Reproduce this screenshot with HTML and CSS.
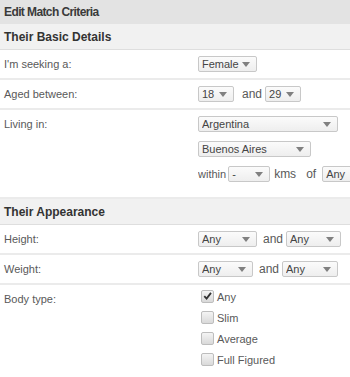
FILE: index.html
```html
<!DOCTYPE html>
<html lang="en">
<head>
<meta charset="UTF-8" />
<title>Edit Match Criteria</title>
<link rel="stylesheet" href="styles.css">
</head>
<body>

<div class="panel">
  <h1 class="panel-title">Edit Match Criteria</h1>

  <h2 class="section">Their Basic Details</h2>
  <div class="row">
    <div class="label">I'm seeking a:</div>
    <div class="field">
      <span class="sel w-female"><select><option>Female</option></select></span>
    </div>
  </div>
  <div class="row">
    <div class="label">Aged between:</div>
    <div class="field">
      <span class="sel w-age"><select><option>18</option></select></span>
      <span class="word word-age">and</span>
      <span class="sel w-age"><select><option>29</option></select></span>
    </div>
  </div>
  <div class="row row-tall">
    <div class="label">Living in:</div>
    <div class="field stack">
      <span class="sel w-country"><select><option>Argentina</option></select></span>
      <span class="sel w-region"><select><option>Buenos Aires</option></select></span>
      <div class="inline">
        <span class="word word-tight">within</span>
        <span class="sel w-dist"><select><option>-</option></select></span>
        <span class="word word-kms">kms</span>
        <span class="word word-of">of</span>
        <span class="sel w-of"><select><option>Any</option></select></span>
      </div>
    </div>
  </div>

  <h2 class="section">Their Appearance</h2>
  <div class="row">
    <div class="label">Height:</div>
    <div class="field">
      <span class="sel w-any"><select><option>Any</option></select></span>
      <span class="word">and</span>
      <span class="sel w-any2"><select><option>Any</option></select></span>
    </div>
  </div>
  <div class="row">
    <div class="label">Weight:</div>
    <div class="field">
      <span class="sel w-any2"><select><option>Any</option></select></span>
      <span class="word">and</span>
      <span class="sel w-any3"><select><option>Any</option></select></span>
    </div>
  </div>
  <div class="row row-body">
    <div class="label">Body type:</div>
    <div class="field checks">
      <label class="check"><span class="box on"><svg viewBox="0 0 12 12" width="12" height="12"><path d="M2.5 6.2 L5 8.8 L9.8 2.6" fill="none" stroke="#333" stroke-width="2"/></svg></span>Any</label>
      <label class="check"><span class="box"></span>Slim</label>
      <label class="check"><span class="box"></span>Average</label>
      <label class="check"><span class="box"></span>Full Figured</label>
    </div>
  </div>
</div>

</body>
</html>
```

FILE: styles.css
```css
html, body {
  margin: 0;
  padding: 0;
  overflow: hidden;
  background: #fff;
}
body {
  font-family: "Liberation Sans", Arial, sans-serif;
  font-size: 11px;
  color: #595959;
}
.panel {
  width: 350px;
  overflow: hidden;
}
.panel-title {
  margin: 0;
  height: 24px;
  line-height: 24px;
  padding: 0 4px;
  background: #e3e3e3;
  font-size: 12px;
  letter-spacing: -0.6px;
  font-weight: bold;
  color: #3a3a3a;
}
.section {
  margin: 0;
  height: 25px;
  line-height: 26px;
  padding: 0 4px;
  background: #f1f1f1;
  border-bottom: 1px solid #dedede;
  font-size: 12px;
  font-weight: bold;
  color: #333;
}
.row {
  display: flex;
  height: 28px;
  border-bottom: 2px solid #ebebeb;
}
.row-tall {
  height: 87px;
}
.row-body {
  height: 92px;
}
.label {
  flex: none;
  width: 194px;
  padding: 8px 0 0 4px;
}
.field {
  flex: 1;
  min-width: 0;
  display: flex;
  align-items: flex-start;
  padding-top: 6px;
  white-space: nowrap;
  overflow: hidden;
}
.stack {
  flex-direction: column;
  gap: 9px;
}
.inline {
  display: flex;
  align-items: center;
}
.word {
  margin: 0 3px 0 6px;
  line-height: 16px;
  font-size: 12px;
}
.word-age {
  margin: 0 3px 0 8px;
}
.word-tight {
  margin: 0 2px 0 0;
  font-size: 11px;
}
.word-kms {
  margin: 0 0 0 4px;
}
.word-of {
  margin: 0 6px 0 10px;
}

/* select boxes */
.sel {
  position: relative;
  display: inline-block;
  height: 16px;
  flex: none;
}
.sel select {
  -webkit-appearance: none;
  appearance: none;
  width: 100%;
  height: 16px;
  margin: 0;
  padding: 0 0 0 3px;
  border: 1px solid #c8c8c8;
  border-radius: 2px;
  background: linear-gradient(#fbfbfb, #eeeeee);
  font-family: inherit;
  font-size: 11px;
  color: #444;
  line-height: 14px;
}
.sel::after {
  content: "";
  position: absolute;
  right: 7px;
  top: 6px;
  border-left: 4px solid transparent;
  border-right: 4px solid transparent;
  border-top: 5px solid #808080;
  pointer-events: none;
}
.w-female { width: 59px; }
.w-age { width: 36px; }
.w-country { width: 140px; }
.w-region { width: 113px; }
.w-dist { width: 42px; }
.w-of { width: 60px; }
.w-any { width: 59px; }
.w-any2 { width: 55px; }
.w-any3 { width: 56px; }

/* checkboxes */
.checks {
  flex-direction: column;
  gap: 8px;
  padding: 5px 0 0 3px;
}
.check {
  display: flex;
  align-items: center;
  height: 13px;
  font-size: 11px;
  color: #595959;
}
.box {
  width: 11px;
  height: 11px;
  margin-right: 3px;
  border: 1px solid #bdbdbd;
  border-radius: 2px;
  background: linear-gradient(#f4f4f4, #d9d9d9);
  display: inline-flex;
}
.box svg {
  margin: -1px 0 0 0;
}
```
